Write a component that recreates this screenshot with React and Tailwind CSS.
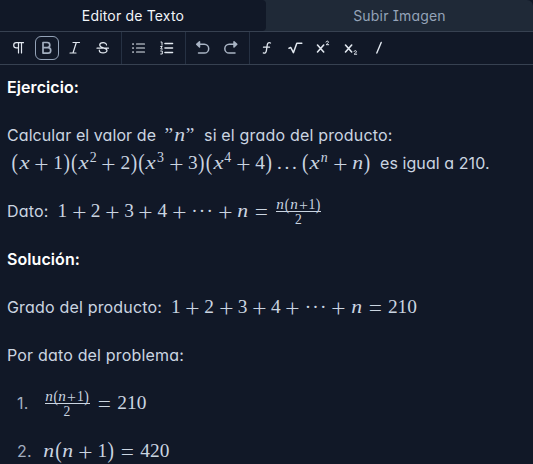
import React from "react";

const uiFont =
  "font-['Inter',sans-serif] [font-feature-settings:'cv11','cv08']";

function Ui({ className = "", tracking = "tracking-[0.18px]", children }) {
  return (
    <span className={`inline-block whitespace-nowrap ${uiFont} ${tracking} ${className}`}>
      {children}
    </span>
  );
}

/* Each math token occupies its typeset advance width, in em. */
const widths = {
  x: "w-[0.572em] italic scale-x-[1.18]",
  n: "w-[0.6em] italic scale-x-[1.12]",
  "(": "w-[0.389em] scale-y-[1.15]",
  ")": "w-[0.389em] scale-y-[1.15]",
  "”": "w-[0.5em]",
  ".": "w-[0.39em]",
  "·": "w-[0.39em]",
};

function Tokens({ text, tight }) {
  return text.split("").map((c, i) => {
    if (c === "+" || c === "=") {
      const gap = tight ? "" : c === "=" ? "mx-[0.278em]" : "mx-[0.222em]";
      return (
        <span key={i} className={`inline-flex w-[0.778em] justify-center font-['Inter',sans-serif] font-extralight leading-none ${gap}`}>
          <span className={c === "=" ? "scale-x-[1.5] scale-y-[1.25]" : tight ? "scale-[1.25]" : "scale-[1.42]"}>{c}</span>
        </span>
      );
    }
    return (
      <span key={i} className={`inline-flex justify-center ${widths[c] || "w-[0.5em]"}`}>
        {c}
      </span>
    );
  });
}

function Sup({ children }) {
  return (
    <span className="relative -top-[0.5em] inline-block w-[0.57em] pl-[0.05em] text-[0.72em] leading-[0]">
      {children}
    </span>
  );
}

function Frac({ className = "" }) {
  return (
    <span
      className={`mt-[3px] inline-flex h-[29px] w-[45px] flex-col items-center font-['Liberation_Serif',serif] text-[13.6px] leading-[14px] ${className}`}
    >
      <span className="flex h-[14px] w-full items-baseline justify-center border-b border-[#cbd5e1] leading-[10px]">
        <Tokens text="n(n+1)" tight />
      </span>
      <span className="h-[15px] leading-[16px]">2</span>
    </span>
  );
}

function MathText({ className = "", children }) {
  return (
    <span
      className={`inline-flex items-baseline whitespace-nowrap font-['Liberation_Serif',serif] text-[19.36px] leading-7 ${className}`}
    >
      {children}
    </span>
  );
}

function Icon({ children, active }) {
  return (
    <button
      className={`mx-0.5 flex size-6 items-center justify-center rounded-md ${active ? "border border-[#94a3b8] text-[#a3afc0]" : "text-[#e2e8f0]"}`}
    >
      <svg
        viewBox="0 0 24 24"
        className="size-6 shrink-0 fill-none stroke-current [stroke-linecap:round] [stroke-linejoin:round] [stroke-width:1.2]"
      >
        {children}
      </svg>
    </button>
  );
}

function Group({ children, last }) {
  return (
    <div className={`flex items-center px-[3.5px] ${last ? "" : "border-r border-[#263143]"}`}>
      {children}
    </div>
  );
}

function Toolbar() {
  return (
    <div className="flex h-[34px] border-y border-[#374151] pl-[1.5px]">
      <Group>
        <Icon>
          <path d="M16.500 6.700H9.300a2.600 2.600 0 0 0 0 5.200H11.500M11.500 6.700v10.300M14.500 6.700v10.300" />
        </Icon>
        <Icon active>
          <path d="M8 6.500h4.200a2.600 2.600 0 0 1 0 5.200H8zM8 11.700h5a2.700 2.700 0 0 1 0 5.400H8z" strokeWidth="1.700" />
        </Icon>
        <Icon>
          <path d="M10 6.500H16.500M7 17h6M13.300 6.500l-3.300 10.500" />
        </Icon>
        <Icon>
          <path d="M15.500 9c0-3.300-6.800-3-6.800.1 0 3.500 7.300 2 7.300 5.300 0 3.300-7.700 3.300-7.700-.2M6 12.200h11.500" />
        </Icon>
      </Group>
      <Group>
        <Icon>
          <path d="M9.500 8h8M9.500 12h8M9.500 16h8" />
          <path d="M6 8h.1M6 12h.1M6 16h.1" strokeWidth="1.700" />
        </Icon>
        <Icon>
          <path d="M10 7.500H17.500M10 12H17.500M10 16.500H17.500" strokeWidth="1.600" />
          <path d="M6 6h1v3.200M5.700 10.500h1.500l-1.500 2.500h1.700M5.700 15h1.600v3H5.700" strokeWidth="1" />
        </Icon>
      </Group>
      <Group>
        <Icon>
          <path d="M8.500 5.700 5.700 8.300 8.500 11zM6 8.300h7.300a4.400 4.400 0 0 1 0 8.800H7.500" strokeWidth="1.500" className="stroke-[#a9b4c4]" />
        </Icon>
        <Icon>
          <path d="M15 5.700l2.800 2.600L15 11zM17.500 8.300h-7.300a4.400 4.400 0 0 0 0 8.800h5.800" strokeWidth="1.500" className="stroke-[#a9b4c4]" />
        </Icon>
      </Group>
      <Group last>
        <Icon>
          <path d="M15.500 7c-2.200-.9-3 .2-3.300 2.200l-.8 5.400c-.3 2-1.300 2.900-3.100 2.300M8.500 11.200h6" strokeWidth="1.300" />
        </Icon>
        <Icon>
          <path d="m6 12.200 1.800-.7 2.600 5.200L13.800 7.200h5" strokeWidth="1.500" />
        </Icon>
        <Icon>
          <path d="m6.500 9 6.200 7M12.700 9 6.500 16" strokeWidth="1.600" />
          <path d="M15 6c.3-1.300 2.600-1.200 2.400.2-.1.900-1.400 1.500-2.300 2.500h2.600" strokeWidth="1" />
        </Icon>
        <Icon>
          <path d="m6.500 9 6.200 7M12.700 9 6.500 16" strokeWidth="1.600" />
          <path d="M15 15.500c.3-1.300 2.600-1.200 2.400.2-.1.900-1.400 1.500-2.300 2.500h2.600" strokeWidth="1" />
        </Icon>
        <Icon>
          <path d="M14.200 6.500 9.800 17" strokeWidth="1.400" />
        </Icon>
      </Group>
    </div>
  );
}

export default function App() {
  return (
    <div className="h-[464px] overflow-hidden bg-[#111827] text-base text-[#cbd5e1]">
      <div className="flex h-[31px] rounded-tr-md bg-[#1f2937] text-sm leading-8">
        <div className="w-[266px] rounded-r bg-[#111827] text-center text-[#f1f5f9]">
          <Ui>Editor de Texto</Ui>
        </div>
        <div className="flex-1 text-center text-[#94a3b8]">
          <Ui>Subir Imagen</Ui>
        </div>
      </div>
      <Toolbar />
      <div className="flex flex-col gap-5 pl-[7px] pt-2 leading-7">
        <p className="flex h-7 text-white">
          <Ui className="font-semibold" tracking="tracking-[0.08px]">Ejercicio:</Ui>
        </p>
        <div className="h-14">
          <p className="flex h-7 items-baseline">
            <Ui className="w-[157px]" tracking="tracking-[0.08px]">Calcular el valor de</Ui>
            <MathText className="w-[40px]">
              <Tokens text="”n”" />
            </MathText>
            <Ui>si el grado del producto:</Ui>
          </p>
          <p className="flex h-7 items-baseline">
            <MathText className="w-[373px] pl-[4px]">
              <Tokens text="(x+1)(x" /><Sup>2</Sup>
              <Tokens text="+2)(x" /><Sup>3</Sup>
              <Tokens text="+3)(x" /><Sup>4</Sup>
              <Tokens text="+4)" />
              <span className="mx-[0.167em] inline-flex"><Tokens text="..." /></span>
              <Tokens text="(x" /><Sup><i>n</i></Sup>
              <Tokens text="+n)" />
            </MathText>
            <Ui tracking="tracking-[0.08px]">es igual a 210.</Ui>
          </p>
        </div>
        <div className="flex h-7 items-center">
          <Ui className="w-[50.5px]">Dato:</Ui>
          <MathText>
            <Tokens text="1+2+3+4+···+n=" />
          </MathText>
          <Frac className="ml-[1.5px]" />
        </div>
        <p className="flex h-7 text-white">
          <Ui className="font-semibold" tracking="tracking-[0.08px]">Solución:</Ui>
        </p>
        <p className="flex h-7 items-baseline">
          <Ui className="w-[164px]">Grado del producto:</Ui>
          <MathText>
            <Tokens text="1+2+3+4+···+n=210" />
          </MathText>
        </p>
        <p className="flex h-7">
          <Ui>Por dato del problema:</Ui>
        </p>
        <ol className="flex flex-col gap-5">
          <li className="flex h-7 items-center pl-[10px]">
            <Ui className="w-[27.5px] text-[#a3afc0]">1.</Ui>
            <Frac className="mr-[2px]" />
            <MathText><Tokens text="=210" /></MathText>
          </li>
          <li className="flex h-7 items-baseline pl-[10px]">
            <Ui className="w-[26px] text-[#a3afc0]">2.</Ui>
            <MathText><Tokens text="n(n+1)=420" /></MathText>
          </li>
        </ol>
      </div>
    </div>
  );
}
